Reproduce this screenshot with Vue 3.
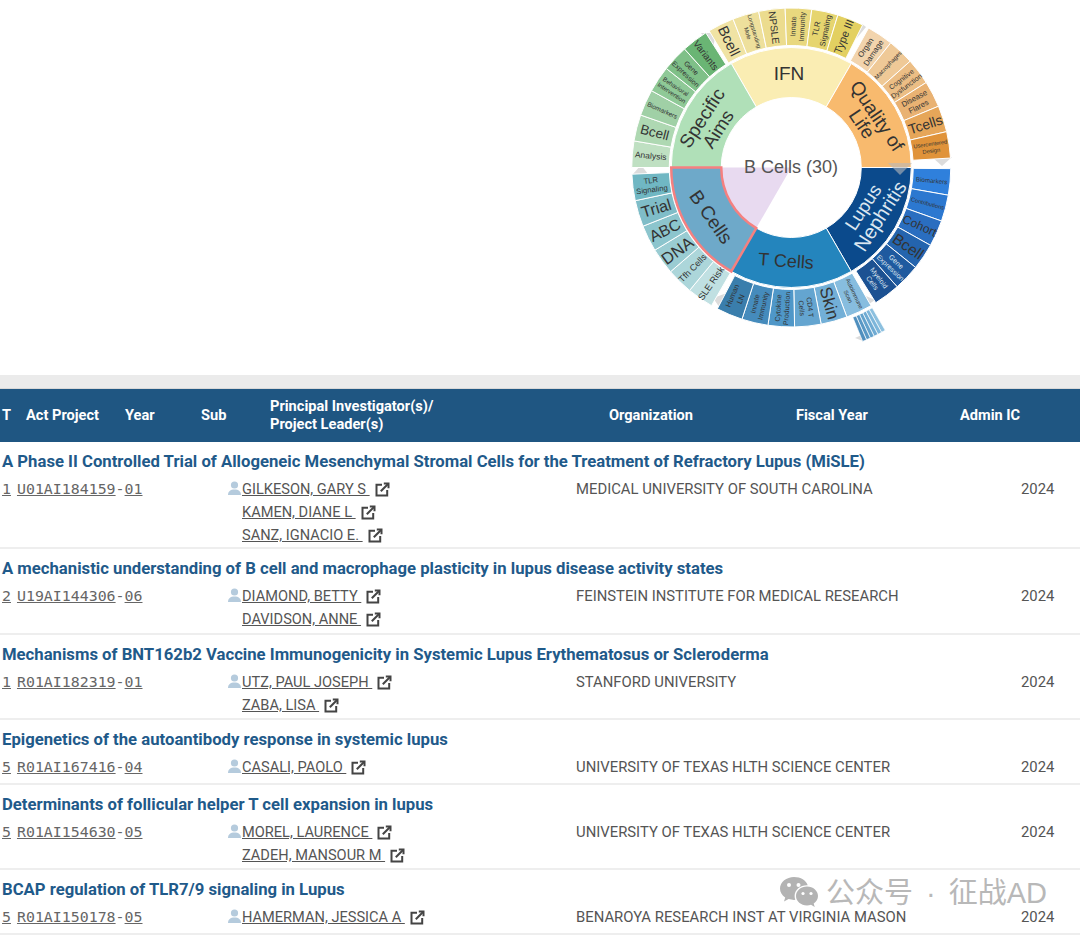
<script setup>
const cx = 791.25
const cy = 167.5

// screen angle: degrees clockwise from 12 o'clock
function pt(r, a) {
  const t = (a * Math.PI) / 180
  return [cx + r * Math.sin(t), cy - r * Math.cos(t)]
}

function arc(r0, r1, a0, a1) {
  const [x0, y0] = pt(r1, a0)
  const [x1, y1] = pt(r1, a1)
  const [x2, y2] = pt(r0, a1)
  const [x3, y3] = pt(r0, a0)
  const big = a1 - a0 > 180 ? 1 : 0
  return `M${x0} ${y0}A${r1} ${r1} 0 ${big} 1 ${x1} ${y1}L${x2} ${y2}A${r0} ${r0} 0 ${big} 0 ${x3} ${y3}Z`
}

const groups = [
  {
    start: -31,
    cells: [
      ['Bcell', 14.6, '#f0e3a4'],
      ['Longstanding|Mole', 5.8, '#eee09c'],
      ['NPSLE', 10, '#ecdc8e'],
      ['Innate|Immunity', 7.3, '#e9d87e'],
      ['TLR|Signaling', 7.8, '#e6d56f'],
      ['Type III', 11, '#e3d061'],
    ],
  },
  {
    start: 29,
    cells: [
      ['Organ|Damage', 7.8, '#f2d4ad'],
      ['Macrophages', 6, '#efc997'],
      ['Cognitive|Dysfunction', 7, '#ecbe85'],
      ['Disease|Flares', 7.7, '#e9b273'],
      ['Tcells', 14, '#e6a659'],
      ['Usercentered|Design', 5.7, '#e0933a'],
    ],
  },
  {
    start: 90.4,
    cells: [
      ['Biomarkers', 6.2, '#2f80dc'],
      ['Contributions', 5.8, '#2c78d0'],
      ['Cohort', 12, '#2a6ec0'],
      ['Bcell', 15.5, '#2464ae'],
      ['Gene|Expression', 7, '#1f5a9f', '#dce6f0'],
      ['Myeloid|Cells', 7, '#1c5192', '#dce6f0'],
    ],
  },
  {
    start: 150,
    cells: [
      ['Autoimmune|Scan', 5.8, '#87bddf'],
      ['Skin', 17, '#72afd7'],
      ['CD4 T|Cells', 7, '#64a5d0'],
      ['Cytokine|Production', 7, '#4f97c8'],
      ['Innate|Immunity', 7, '#458bbc'],
      ['Human|LN', 7.5, '#3a7eac'],
    ],
  },
  {
    start: 210,
    cells: [
      ['SLE Risk', 9.4, '#c0e0e2'],
      ['Tfh Cells', 9, '#acd6da'],
      ['DNA', 16.5, '#9accd2'],
      ['ABC', 15.8, '#8cc5cd'],
      ['Trial', 16, '#7fbdc8'],
      ['TLR|Signaling', 7.7, '#70b7c3'],
    ],
  },
  {
    start: 270,
    cells: [
      ['Analysis', 8.5, '#bfe0c2'],
      ['Bcell', 13.5, '#aed8b2'],
      ['Biomarkers', 6.4, '#a0d0a6'],
      ['Behavioral|Intervention', 6.2, '#8fc997'],
      ['Gene|Expression', 7, '#7fc088'],
      ['Variants', 9.6, '#6ab574'],
    ],
  },
]

const cellWidth = 9.6
const outerCells = groups.flatMap((g) =>
  g.cells.map(([label, size, fill, color], i) => {
    const a0 = g.start + i * cellWidth
    const a1 = a0 + cellWidth
    const mid = (a0 + a1) / 2
    const norm = ((mid % 360) + 360) % 360
    const rot = norm > 0 && norm < 180 ? mid - 90 : mid + 90
    const [x, y] = pt(141, mid)
    return {
      key: `${g.start}-${i}`,
      d: arc(122, 159.5, a0, a1),
      fill,
      color: color || '#333',
      size,
      x,
      y,
      rot,
      lines: label.split('|'),
    }
  })
)

const midCells = [
  { d: arc(70, 120, -30, 30), fill: '#faedb3' },
  { d: arc(70, 120, 30, 90), fill: '#f8ba6e' },
  { d: arc(70, 120, 90, 150), fill: '#0b4a8c' },
  { d: arc(70, 120, 150, 210), fill: '#2485bd' },
  { d: arc(70, 120, 270, 330), fill: '#b0e0b8' },
]

const midLabels = [
  { text: 'IFN', x: 789, y: 73, rot: 0, size: 19 },
  { text: 'Quality of', x: 877, y: 116, rot: 56, size: 19 },
  { text: 'Life', x: 862, y: 124, rot: 56, size: 19 },
  { text: 'Nephritis', x: 880, y: 216, rot: -57, size: 20, color: '#dbe6f0' },
  { text: 'Lupus', x: 863, y: 207, rot: -57, size: 18.5, color: '#dbe6f0' },
  { text: 'T Cells', x: 786, y: 261, rot: 4, size: 18 },
  { text: 'B Cells', x: 711, y: 217, rot: 55, size: 19 },
  { text: 'Specific', x: 702, y: 118, rot: -57, size: 19 },
  { text: 'Aims', x: 718, y: 129, rot: -57, size: 18.5 },
]

const strips = Array.from({ length: 6 }, (_, i) => ({
  d: arc(162, 188, 150 + i * 1.28, 150 + (i + 1) * 1.28),
  fill: ['#8cc0df', '#7db6da', '#6fabd3', '#63a2cc', '#5898c5', '#4f8fbe'][i],
}))

const markers = [
  '932,157 952,157 942,166',
  '633,174 648,174 641,165',
  '701,33 716,33 713,48',
  '856,39 866,27 862,24',
  '713,298 727,293 720,308',
  '866,296 875,300 869,304',
  '855,338 866,333 863,341',
]

const headers = ['T', 'Act Project', 'Year', 'Sub', 'Principal Investigator(s)/ Project Leader(s)', 'Organization', 'Fiscal Year', 'Admin IC']

const rows = [
  {
    title: 'A Phase II Controlled Trial of Allogeneic Mesenchymal Stromal Cells for the Treatment of Refractory Lupus (MiSLE)',
    type: '1',
    project: 'U01AI184159',
    sub: '01',
    people: ['GILKESON, GARY S', 'KAMEN, DIANE L', 'SANZ, IGNACIO E.'],
    org: 'MEDICAL UNIVERSITY OF SOUTH CAROLINA',
  },
  {
    title: 'A mechanistic understanding of B cell and macrophage plasticity in lupus disease activity states',
    type: '2',
    project: 'U19AI144306',
    sub: '06',
    people: ['DIAMOND, BETTY', 'DAVIDSON, ANNE'],
    org: 'FEINSTEIN INSTITUTE FOR MEDICAL RESEARCH',
  },
  {
    title: 'Mechanisms of BNT162b2 Vaccine Immunogenicity in Systemic Lupus Erythematosus or Scleroderma',
    type: '1',
    project: 'R01AI182319',
    sub: '01',
    people: ['UTZ, PAUL JOSEPH', 'ZABA, LISA'],
    org: 'STANFORD UNIVERSITY',
  },
  {
    title: 'Epigenetics of the autoantibody response in systemic lupus',
    type: '5',
    project: 'R01AI167416',
    sub: '04',
    people: ['CASALI, PAOLO'],
    org: 'UNIVERSITY OF TEXAS HLTH SCIENCE CENTER',
  },
  {
    title: 'Determinants of follicular helper T cell expansion in lupus',
    type: '5',
    project: 'R01AI154630',
    sub: '05',
    people: ['MOREL, LAURENCE', 'ZADEH, MANSOUR M'],
    org: 'UNIVERSITY OF TEXAS HLTH SCIENCE CENTER',
  },
  {
    title: 'BCAP regulation of TLR7/9 signaling in Lupus',
    type: '5',
    project: 'R01AI150178',
    sub: '05',
    people: ['HAMERMAN, JESSICA A'],
    org: 'BENAROYA RESEARCH INST AT VIRGINIA MASON',
  },
]
</script>

<template>
  <div class="page">
    <svg class="chart" width="1080" height="375" viewBox="0 0 1080 375">
      <polygon v-for="m in markers" :key="m" :points="m" fill="#dcdcdc" />
      <path :d="arc(0, 70, 210, 270)" fill="#e8daf0" />
      <path v-for="s in strips" :key="s.d" :d="s.d" :fill="s.fill" stroke="#fff" stroke-width="0.7" />
      <path v-for="c in outerCells" :key="c.key" :d="c.d" :fill="c.fill" stroke="#fff" stroke-width="1" />
      <path v-for="c in midCells" :key="c.fill" :d="c.d" :fill="c.fill" stroke="#fff" stroke-width="1" />
      <path :d="arc(70, 120, 210, 270)" fill="#6ea9c9" stroke="#f58080" stroke-width="2.5" />
      <polygon points="888,163 912,163 900,175" fill="#b9b9b9" opacity="0.6" />

      <g v-for="c in outerCells" :key="c.key + 't'" :transform="`translate(${c.x} ${c.y}) rotate(${c.rot})`">
        <text
          v-for="(line, i) in c.lines"
          :key="line"
          class="label"
          :font-size="c.size"
          :fill="c.color"
          :y="(i - (c.lines.length - 1) / 2) * c.size * 1.2"
        >{{ line }}</text>
      </g>
      <text
        v-for="l in midLabels"
        :key="l.text"
        class="label"
        :font-size="l.size"
        :fill="l.color || '#333'"
        :transform="`translate(${l.x} ${l.y}) rotate(${l.rot})`"
      >{{ l.text }}</text>
      <text class="label center" x="791" y="167" font-size="18">B Cells (30)</text>
    </svg>

    <div class="band"></div>

    <div class="head">
      <div v-for="h in headers" :key="h" class="head-cell">{{ h }}</div>
    </div>

    <div v-for="r in rows" :key="r.project" class="row">
      <div class="title">{{ r.title }}</div>
      <div class="cols">
        <div class="project"><u class="type">{{ r.type }}</u><u>{{ r.project }}</u>-<u>{{ r.sub }}</u></div>
        <svg class="person" width="15" height="15" viewBox="0 0 15 15">
          <circle cx="7.5" cy="4" r="3.6" fill="#b5cbdd" />
          <path d="M1 14c0-3.8 2.4-5.6 6.5-5.6S14 10.200 14 14z" fill="#b5cbdd" />
        </svg>
        <div class="people">
          <div v-for="p in r.people" :key="p" class="person-line">
            <span class="name">{{ p }}&nbsp;</span>
            <svg class="ext" width="15" height="15" viewBox="0 0 15 15" fill="none" stroke="#444" stroke-width="2">
              <path d="M7 2.800H1.500v10.700h10.700V8" />
              <path d="M5.800 9.200 13 2" />
              <path d="M8.800 1.500h4.700v4.700" />
            </svg>
          </div>
        </div>
        <div class="org">{{ r.org }}</div>
        <div class="year">2024</div>
      </div>
    </div>

    <div class="mark">
      <svg width="40" height="34" viewBox="0 0 40 34">
        <path d="M15 1C7.500 1 1 6 1 12.500c0 3.700 2 6.800 5.200 9L5 25.500l4.600-2.400c1.700.5 3.500.8 5.400.8l1.300-.1c-.5-1.300-.7-2.500-.7-3.800 0-6 5.500-10.700 12.300-10.700h.8C27.300 4.500 21.700 1 15 1z" fill="#b3b3b3" />
        <path d="M39 20c0-5.200-5-9.400-11-9.400S17 14.800 17 20s5 9.400 11 9.400c1.400 0 2.700-.2 4-.6l3.700 2.100-1-3.400C37.300 25.800 39 23.100 39 20z" fill="#b3b3b3" />
        <circle cx="10" cy="9" r="2" fill="#fff" />
        <circle cx="19.500" cy="9" r="2" fill="#fff" />
        <circle cx="24" cy="17.500" r="1.600" fill="#fff" />
        <circle cx="32" cy="17.500" r="1.600" fill="#fff" />
      </svg>
      <span>公众号 · 征战AD</span>
    </div>
  </div>
</template>

<style scoped>
.page {
  position: relative;
  width: 1080px;
  height: 935px;
  overflow: hidden;
  background: #fff;
  font-family: Roboto, "Liberation Sans", sans-serif;
}

.chart {
  display: block;
}

.label {
  font-family: "Liberation Sans", Arial, sans-serif;
  text-anchor: middle;
  dominant-baseline: central;
}

.center {
  fill: #555;
}

.band {
  height: 13px;
  background: #ebebeb;
  border-bottom: 1px solid #d8d8d8;
}

.head {
  box-sizing: border-box;
  display: grid;
  grid-template-columns: 24px 99px 76px 69px 339px 187px 164px 1fr;
  align-items: center;
  height: 53px;
  padding: 0 0 2px 2px;
  background: #1f5682;
  color: #fff;
  font-size: 14.6px;
  font-weight: 700;
  line-height: 18px;
}

.head-cell:nth-child(5) {
  width: 190px;
}

.row {
  box-sizing: border-box;
  min-height: 65px;
  padding: 10px 0 1.3px 2px;
  border-bottom: 2px solid #eee;
}

.head + .row {
  padding-bottom: 0.3px;
}

.title {
  height: 20px;
  line-height: 20px;
  color: #1f5a8a;
  font-size: 16.7px;
  font-weight: 700;
  white-space: nowrap;
}

.cols {
  display: grid;
  grid-template-columns: 225px 15px 334px 445px 1fr;
  margin-top: 6px;
  color: #555;
  font-size: 14.85px;
  line-height: 23px;
}

.project {
  font-family: "DejaVu Sans Mono", "Liberation Mono", monospace;
  font-size: 14.9px;
  color: #666;
  white-space: nowrap;
}

.type {
  margin-right: 6px;
}

.person {
  margin-top: 3px;
}

.people {
  font-size: 14.6px;
}

.person-line {
  display: flex;
  align-items: center;
  gap: 5px;
  height: 23px;
}

.name {
  text-decoration: underline;
  white-space: nowrap;
}

.org,
.year {
  white-space: nowrap;
}

.mark {
  position: absolute;
  left: 779px;
  top: 876px;
  display: flex;
  align-items: center;
  gap: 7px;
  color: #b8b8b8;
  font-family: "Liberation Sans", "Noto Sans CJK SC", sans-serif;
  font-size: 29px;
  word-spacing: 5px;
  line-height: 34px;
}
</style>
